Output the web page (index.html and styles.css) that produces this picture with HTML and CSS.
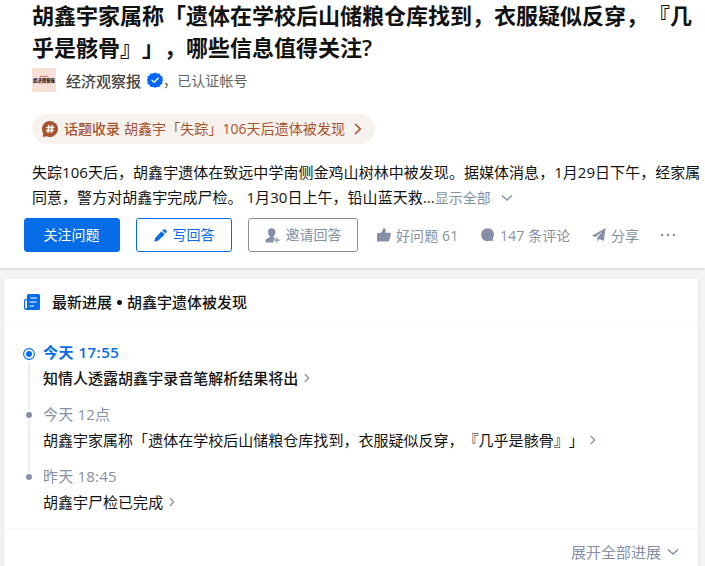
FILE: index.html
```html
<!DOCTYPE html>
<html lang="zh-CN">
<head>
    <meta charset="UTF-8">
    <title>胡鑫宇家属称「遗体在学校后山储粮仓库找到」</title>
    <meta name="viewport" content="width=device-width, initial-scale=1.0">
    <link rel="stylesheet" href="styles.css">
</head>
<body>
    <header class="question">
        <h1 class="question-title">胡鑫宇家属称「遗体在学校后山储粮仓库找到，衣服疑似反穿，『几<br>乎是骸骨』」，哪些信息值得关注<span class="mark">?</span></h1>

        <div class="author">
            <div class="avatar"><i class="avatar-mark"></i><span class="avatar-text">经济观察报</span><i class="avatar-line"></i></div>
            <span class="author-name">经济观察报</span>
            <svg class="verified" width="16" height="16" viewBox="0 0 16 16">
                <path fill="#0066ff" d="M8 .4l2 1.2 2.4-.1 1.1 2.1 2.1 1.2-.1 2.4L16 8l-.8 1.8.1 2-2 1.2-1.2 2.1-2.3-.1L8 15.7 6 15l-2.3.1-1.2-2.1-2-1.2.1-2.2L0 8l.6-1.6-.1-2 2-1.2 1.2-1.7L6 1.6z"/>
                <path fill="none" stroke="#fff" stroke-width="1.3" stroke-linecap="round" stroke-linejoin="round" d="M4.900 8.100l2.200 2.200 4.200-4.300"/>
            </svg>
            <span class="author-note">，<span>已认证帐号</span></span>
        </div>

        <a class="topic" href="#">
            <svg width="16" height="16" viewBox="0 0 16 16">
                <path fill="#a7532d" d="M8 0a8 8 0 1 1-3.500 15.200L.8 16 1.200 12.200A8 8 0 0 1 8 0z"/>
                <path fill="none" stroke="#fff" stroke-width="1.4" stroke-linecap="round" d="M7 4.500L6 11.500M10.300 4.500L9.300 11.500M4.800 6.500h7M4.400 9.500h7"/>
            </svg>
            <b>话题收录</b>
            <span class="topic-text">胡鑫宇「失踪」106天后遗体被发现</span>
            <svg class="topic-arrow" width="8" height="12" viewBox="0 0 8 12"><path fill="none" stroke="#a7532d" stroke-width="1.6" d="M1 1l5.300 5L1 11"/></svg>
        </a>

        <div class="detail">
            <div class="line-one">失踪106天后，胡鑫宇遗体在致远中学南侧金鸡山树林中被发现。据媒体消息，1月29日下午，经家属</div>
            <div class="line-two"><span class="detail-text">同意，警方对胡鑫宇完成尸检。 1月30日上午，铅山蓝天救...</span><span class="more">显示全部</span>
                <svg width="12" height="8" viewBox="0 0 12 8"><path fill="none" stroke="#8590a6" stroke-width="1.5" d="M1 1.500l5 4.500 5-4.500"/></svg>
            </div>
        </div>

        <div class="actions">
            <button class="btn btn-blue">关注问题</button>
            <button class="btn btn-line">
                <svg width="13" height="13" viewBox="0 0 13 13"><path fill="#056de8" d="M.3 12.700l.9-3.700L7.600 2.300l3.100 3.100-6.700 6.400zM8.300 1.600l.9-.9c.7-.7 1.800-.6 2.500.1l.5.500c.7.700.7 1.600.1 2.300l-.9.900z"/></svg>
                写回答
            </button>
            <button class="btn btn-gray">
                <svg width="15" height="15" viewBox="0 0 15 15"><g fill="#8590a6"><path d="M6.600.3c2.400 0 3.900 1.500 3.900 3.700 0 1.900-.8 3.400-1.900 4.200v1l1.100.6v1.700H8.500v2.900H.6c-.5-2.600.7-4.300 3.600-4.900L5 8.300C3.700 7.400 2.900 5.900 2.900 4 2.900 1.700 4.300.3 6.600.3z"/><path d="M11.200 9.500h1.200v2H14.600v1.200h-2.200v2.100h-1.200v-2.100H9.100v-1.200h2.100z"/></g></svg>
                邀请回答
            </button>
            <div class="action like">
                <svg width="14" height="14" viewBox="0 0 14 14"><path fill="#8590a6" d="M.7 5H3.500C5.300 4 5.700 2.900 5.700 1.100 5.700.1 8.500-.4 8.700 2c.1.900-.1 1.800-.4 2.800h4.200c1.200 0 1.700.7 1.400 1.800l-1.500 5.500c-.3 1-.7 1.400-1.700 1.400H.7A.7.700 0 0 1 0 12.800V5.700A.7.700 0 0 1 .7 5z"/></svg>
                <span>好问题 61</span>
            </div>
            <div class="action comments">
                <svg width="14" height="14" viewBox="0 0 14 14"><path fill="#8590a6" d="M6.700.2c3.700 0 6.300 2.800 6.300 6.400 0 1.500-.5 2.900-1.300 3.900l.6 2.800-2.700-.7a7 7 0 0 1-2.900.7C2.900 13.300.2 10.400.2 6.700.2 3 3 .2 6.700.2z"/></svg>
                <span>147 条评论</span>
            </div>
            <div class="action share">
                <svg width="14" height="14" viewBox="0 0 14 14"><path fill="#8590a6" d="M13.600.1L0 7.700l3.600 1.400 7-6-5.300 6.700v4l2.200-2.700 4.300 1.900z"/></svg>
                <span>分享</span>
            </div>
            <svg class="dots" width="16" height="4" viewBox="0 0 16 4"><g fill="#8590a6"><circle cx="2" cy="2" r="1.300"/><circle cx="8" cy="2" r="1.300"/><circle cx="14" cy="2" r="1.300"/></g></svg>
        </div>
    </header>

    <section class="card">
        <div class="card-head">
            <svg width="16" height="16" viewBox="0 0 16 16">
                <path fill="#056de8" d="M4.500 0h10A1.500 1.500 0 0 1 16 1.500v13a1.500 1.500 0 0 1-1.500 1.500h-12A2.500 2.500 0 0 1 0 13.500V6.500A1.500 1.500 0 0 1 1.500 5H3V1.500A1.500 1.500 0 0 1 4.500 0z"/>
                <path fill="#fff" d="M1.200 6.200H3v7.200a.9.900 0 0 1-1.800 0z"/>
                <path stroke="#fff" stroke-width="1.200" d="M6.500 4h6.500M5.500 8h7M5.500 12h4.500"/>
            </svg>
            <div class="card-title"><span>最新进展</span><i class="bullet"></i><span>胡鑫宇遗体被发现</span></div>
        </div>

        <ul class="timeline">
            <li class="current">
                <div class="rail"><svg width="12" height="12" viewBox="0 0 12 12"><circle cx="6" cy="6" r="5.400" fill="#fff" stroke="#056de8" stroke-width="1.100"/><circle cx="6" cy="6" r="3" fill="#056de8"/></svg></div>
                <div class="event">
                    <div class="time">今天 17:55</div>
                    <div class="text">知情人透露胡鑫宇录音笔解析结果将出<svg width="6" height="10" viewBox="0 0 6 10"><path fill="none" stroke="#8590a6" stroke-width="1.200" d="M.8 1l3.900 4L.8 9"/></svg></div>
                </div>
            </li>
            <li>
                <div class="rail"><i class="dot"></i></div>
                <div class="event">
                    <div class="time">今天 12点</div>
                    <div class="text">胡鑫宇家属称「遗体在学校后山储粮仓库找到，衣服疑似反穿，『几乎是骸骨』」<svg width="6" height="10" viewBox="0 0 6 10"><path fill="none" stroke="#8590a6" stroke-width="1.200" d="M.8 1l3.900 4L.8 9"/></svg></div>
                </div>
            </li>
            <li>
                <div class="rail"><i class="dot"></i></div>
                <div class="event">
                    <div class="time">昨天 18:45</div>
                    <div class="text">胡鑫宇尸检已完成<svg width="6" height="10" viewBox="0 0 6 10"><path fill="none" stroke="#8590a6" stroke-width="1.200" d="M.8 1l3.900 4L.8 9"/></svg></div>
                </div>
            </li>
        </ul>

        <div class="card-foot">
            <span>展开全部进展</span>
            <svg width="12" height="8" viewBox="0 0 12 8"><path fill="none" stroke="#8590a6" stroke-width="1.500" d="M1 1.500l5 4.500 5-4.500"/></svg>
        </div>
    </section>
</body>
</html>
```
FILE: styles.css
```css
* { box-sizing: border-box; }

body {
    margin: 0;
    height: 566px;
    overflow: hidden;
    background-color: #f4f4f4;
    color: #121212;
    font-family: "Open Sans", "Noto Sans CJK SC", sans-serif;
    font-size: 15px;
    text-spacing-trim: space-all;
    white-space: nowrap;
}

svg { display: block; flex: none; }

/* Вопрос */
.question {
    height: 269px;
    background: #fff;
    box-shadow: 0 1px 3px rgba(18, 18, 18, 0.14);
}
.question-title {
    margin: -1px 0 0;
    padding-left: 32px;
    font-size: 22px;
    font-weight: 700;
    line-height: 32px;
}
.mark { font-weight: 600; }

.author {
    display: flex;
    align-items: center;
    height: 24px;
    margin: 5px 0 0 32px;
}
.avatar {
    display: flex;
    flex-direction: column;
    align-items: center;
    justify-content: center;
    width: 24px;
    height: 24px;
    border-radius: 2px;
    background: #f9dfd5;
    overflow: hidden;
}
.avatar-text {
    flex: none;
    margin: -2px 0;
    font-size: 10px;
    font-weight: 900;
    line-height: 10px;
    color: #33201c;
    transform: scale(0.44);
}
.avatar-mark { width: 8px; height: 1px; background: #d8706a; }
.avatar-line { width: 13px; height: 1px; background: #e3c3b9; }
.author-name { margin-left: 10px; font-weight: 500; color: #444; }
.verified { margin-left: 6px; }
.author-note { font-size: 14px; color: #646464; letter-spacing: 0.1px; }

.topic {
    display: flex;
    align-items: center;
    width: 343px;
    height: 30px;
    margin: 22px 0 0 32px;
    padding-left: 10px;
    border-radius: 15px;
    background: #f7f2ee;
    color: #a7532d;
    font-size: 14px;
    line-height: 20px;
    text-decoration: none;
}
.topic b { margin: 0 4px 0 6px; font-weight: 500; }
.topic-text { letter-spacing: 0.06px; }
.topic-arrow { margin-left: 9px; }

.detail { padding: 16px 0 0 32px; line-height: 25px; }
.line-one { letter-spacing: 0.04px; }
.line-two { display: flex; align-items: center; }
.detail-text { letter-spacing: 0.04px; }
.more { font-size: 14px; color: #8590a6; }
.line-two svg { margin-left: 10px; }

.actions {
    display: flex;
    align-items: center;
    height: 34px;
    margin: 8px 0 0 24px;
    color: #8590a6;
    font-size: 14px;
}
.btn {
    display: flex;
    align-items: center;
    justify-content: center;
    gap: 6px;
    width: 96px;
    height: 34px;
    margin: 0 16px 0 0;
    padding: 0 0 2px;
    border: 1px solid #056de8;
    border-radius: 3px;
    background: #fff;
    color: #056de8;
    font: inherit;
    cursor: pointer;
}
.btn svg { margin-top: 2px; }
.btn-blue { padding-right: 1px; background: #056de8; color: #fff; }
.btn-gray { width: 110px; margin-right: 19px; border-color: #8590a6; color: #8590a6; }
.action { display: flex; align-items: center; gap: 5px; letter-spacing: 0.1px; }
.like { width: 104px; }
.comments { width: 111px; }
.share { width: 68px; }

/* Лента событий */
.card {
    width: 694px;
    height: 300px;
    margin: 11px 0 0 4px;
    background: #fff;
    box-shadow: 0 1px 3px rgba(18, 18, 18, 0.1);
}
.card-head {
    display: flex;
    align-items: center;
    height: 48px;
    padding: 0 0 1px 20px;
    border-bottom: 1px solid #f6f6f6;
    font-weight: 500;
}
.card-head svg { margin: 0 12px 0 0; }
.card-title { display: flex; align-items: center; padding-bottom: 1px; }
.bullet {
    width: 5px;
    height: 5px;
    margin: 2px 5px 0;
    border-radius: 50%;
    background: #121212;
}

.timeline {
    height: 202px;
    margin: 0;
    padding: 13px 0 0 18px;
    list-style: none;
    border-bottom: 1px solid #f6f6f6;
}
.timeline li { display: flex; height: 62px; }
.rail {
    display: flex;
    flex-direction: column;
    align-items: center;
    width: 14px;
    margin-right: 7px;
    padding-top: 10px;
}
.rail::after {
    content: "";
    flex: none;
    width: 2px;
    height: 52px;
    margin-top: 2px;
    background: #ebeef5;
}
.timeline li:last-child .rail::after { display: none; }
.dot {
    flex: none;
    width: 6px;
    height: 6px;
    border-radius: 50%;
    background: #8590a6;
}
.rail svg { margin-top: -2px; }
.current .rail::after { height: 48px; margin-top: 2px; }
.event { margin-top: -1px; }
.time { line-height: 26px; color: #8590a6; letter-spacing: 0.2px; }
.text { display: flex; align-items: center; line-height: 26px; letter-spacing: 0.02px; }
.text svg { margin-left: 6px; }
.current .time { font-weight: 600; color: #056de8; letter-spacing: 0.5px; }
.current .text { font-weight: 500; }

.card-foot {
    display: flex;
    align-items: center;
    justify-content: flex-end;
    height: 45px;
    padding-right: 19px;
    color: #8590a6;
}
.card-foot svg { margin-left: 6px; }
```
